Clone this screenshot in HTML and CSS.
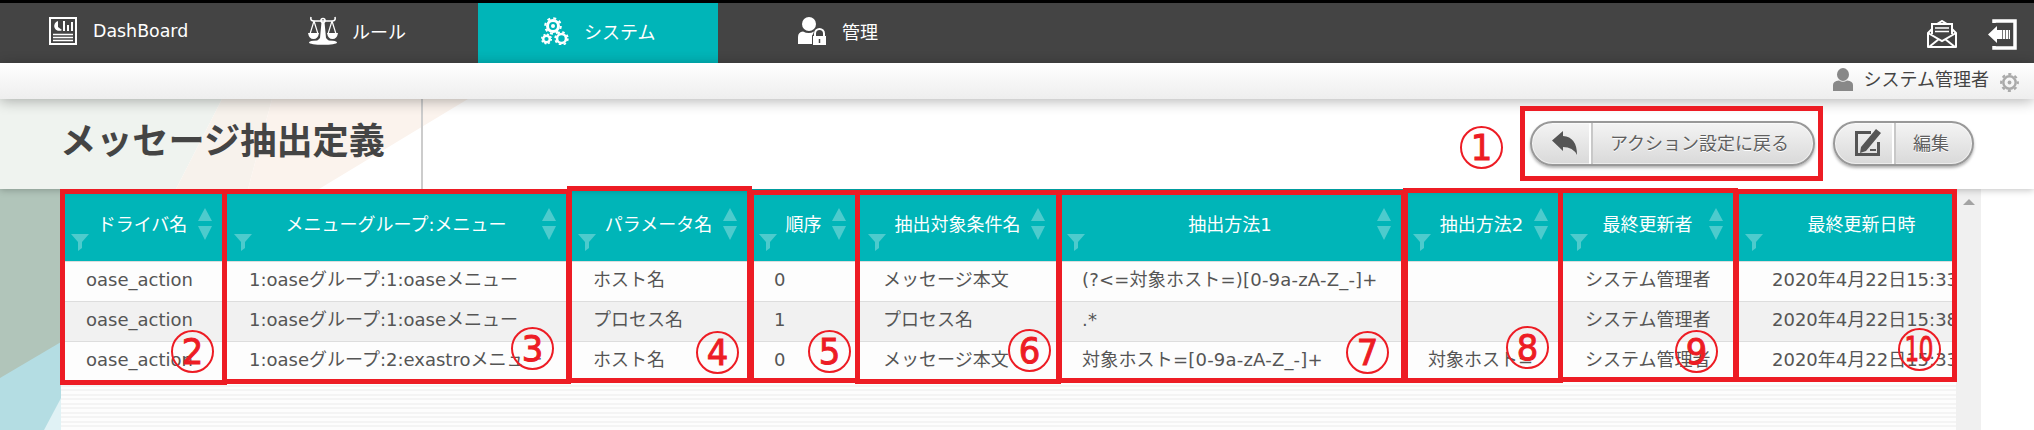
FILE: index.html
```html
<!DOCTYPE html>
<html lang="ja">
<head>
<meta charset="utf-8">
<title>メッセージ抽出定義</title>
<link rel="stylesheet" href="styles.css">
</head>
<body>
<div class="page">
<nav class="nav">
  <div class="tab tab-dash"><svg class="ic" viewBox="0 0 28 28"><path fill="none" stroke="#fff" stroke-width="2" d="M1 1h26v26H1z"/><path fill="#fff" d="M9 4v6l4 3a5 5 0 1 1-4-9zM14 4h2v10h-2zM18 8h2v6h-2zM22 5h2v9h-2z"/><path stroke="#fff" stroke-width="1.3" d="M4 17.5h20M4 20.5h20M4 23.5h20"/></svg><span>DashBoard</span></div>
  <div class="tab tab-rule"><svg class="ic ic-rule" viewBox="0 0 30 30"><g fill="none" stroke="#fff" stroke-width="1.6"><path d="M3 1q-1 4 3 4h18q4 0 3-4"/><path stroke-width="1.2" d="M6 5L2 18M6 5l4 13M24 5l-4 13M24 5l4 13"/><circle cx="15" cy="4.500" r="2"/></g><path fill="#fff" d="M0 17h11q-1 6-5.500 6T0 17zM19 17h11q-1 6-5.500 6T19 17zM13.500 6h3L18 22l3 3H9l3-3z"/><ellipse cx="15" cy="26.500" rx="14" ry="2.300" fill="#fff"/></svg><span>ルール</span></div>
  <div class="tab tab-system"><svg class="ic" viewBox="0 0 28 28"><g fill="none" stroke="#fff"><circle cx="12" cy="9" r="5.500" stroke-width="3"/><circle cx="12" cy="9" r="7.800" stroke-width="2" stroke-dasharray="3 3.130"/><circle cx="5.500" cy="22" r="3.300" stroke-width="2.400"/><circle cx="5.500" cy="22" r="4.800" stroke-width="1.500" stroke-dasharray="1.900 1.870"/><circle cx="20.500" cy="21.500" r="4.500" stroke-width="2.600"/><circle cx="20.500" cy="21.500" r="6.300" stroke-width="1.800" stroke-dasharray="2.500 2.450"/></g><circle cx="12" cy="9" r="2" fill="#fff"/></svg><span>システム</span></div>
  <div class="tab tab-admin"><svg class="ic ic-admin" viewBox="0 0 30 28"><circle cx="12" cy="7" r="7" fill="#fff"/><path fill="#fff" d="M1 27v-7q0-5 5-5.500 6 3 11 0l-2 5v7.500z"/><path fill="#fff" stroke="#444" d="M15.500 18.500h14v10h-14z"/><path fill="none" stroke="#fff" stroke-width="2" d="M18 19v-2.500a4.500 4.500 0 0 1 9 0V19"/><path stroke="#444" stroke-width="1.500" d="M22.500 22v4"/></svg><span>管理</span></div>
  <div class="nav-tools">
    <svg class="ic-mail" viewBox="0 0 30 29"><g fill="none" stroke="#fff" stroke-width="2"><path stroke-linejoin="round" d="M5 9l-4 4v14h28V13l-4-4"/><path d="M1 13l14 8 14-8M2 27l10-8M28 27l-10-8M5 14V4h20v10M10 4l5-3 5 3"/><path stroke-width="1.500" d="M8 8h14M8 11.500h14"/></g></svg>
    <svg class="ic-out" viewBox="0 0 29 31"><path fill="none" stroke="#fff" stroke-width="3.500" d="M6 4V2h21v27H6v-2"/><path fill="#fff" d="M0 15.500L9 7v4h13v9H9v4z"/><path stroke="#777" d="M14.500 11v9M17.500 11v9M20.500 11v9"/></svg>
  </div>
</nav>
<div class="userbar">
  <svg class="ic-user" viewBox="0 0 20 23"><ellipse cx="10" cy="6.500" rx="6" ry="6.500" fill="#888"/><path fill="#888" d="M0 23v-6q0-4 6-4.500 4 2.500 8 0 6 .500 6 4.500v6z"/></svg>
  <span>システム管理者</span>
  <svg class="ic-gear" viewBox="0 0 20 20"><g fill="none" stroke="#aaa"><circle cx="10" cy="10" r="6.500" stroke-width="2.600"/><circle cx="10" cy="10" r="8.800" stroke-width="2.200" stroke-dasharray="3.300 3.610" stroke-dashoffset="1.600"/></g><circle cx="10" cy="10" r="2" fill="#aaa"/></svg>
</div>
<header class="title">
  <svg class="title-bg" viewBox="0 0 470 90"><path fill="#eff3ef" d="M0 0h222l-46 90H0z"/><path fill="#f7f2ec" d="M222 0h50l-24 90h-72z"/><path fill="#fbf3ed" d="M272 0h196L319 90h-71z"/></svg>
  <h1>メッセージ抽出定義</h1>
  <div class="actions">
    <button class="btn btn-back"><span class="btn-ic"><svg width="26" height="24" viewBox="0 0 26 24"><path fill="#555" d="M0 9.500L11 0v5q14 1 14 19-4-8-14-8v4z"/></svg></span><span class="btn-tx">アクション設定に戻る</span></button>
    <button class="btn btn-edit"><span class="btn-ic"><svg width="28" height="28" viewBox="0 0 28 28"><path fill="none" stroke="#555" stroke-width="3" d="M17 3.500H2.500v22h22V13"/><path fill="#555" d="M22 0l5 4-15 18-6 2 1-6zM16 20h6v2h-6z"/></svg></span><span class="btn-tx">編集</span></button>
  </div>
</header>
<main class="main">
  <svg class="main-bg" viewBox="0 0 61 241"><path fill="#b1c5ba" d="M0 0h61v154L0 190z"/><path fill="#b4dde3" d="M0 189l61-36v88H0z"/><path fill="#e0f2f5" d="M61 209v32H44z"/></svg>
  <div class="sheet">
    <table>
      <colgroup><col class="c1"><col class="c2"><col class="c3"><col class="c4"><col class="c5"><col class="c6"><col class="c7"><col class="c8"><col class="c9"></colgroup>
      <thead><tr></tr></thead>
      <tbody>
        <tr><td>oase_action</td><td>1:oaseグループ:1:oaseメニュー</td><td>ホスト名</td><td>0</td><td>メッセージ本文</td><td class="rule">(?&lt;=対象ホスト=)[0-9a-zA-Z_-]+</td><td></td><td>システム管理者</td><td class="date">2020年4月22日15:33</td></tr>
        <tr><td>oase_action</td><td>1:oaseグループ:1:oaseメニュー</td><td>プロセス名</td><td>1</td><td>プロセス名</td><td class="rule">.*</td><td></td><td>システム管理者</td><td class="date">2020年4月22日15:38</td></tr>
        <tr><td>oase_action</td><td>1:oaseグループ:2:exastroメニュー</td><td>ホスト名</td><td>0</td><td>メッセージ本文</td><td class="rule">対象ホスト=[0-9a-zA-Z_-]+</td><td>対象ホスト=</td><td>システム管理者</td><td class="date">2020年4月22日15:33</td></tr>
      </tbody>
    </table>
  </div>
  <div class="scroll"><i></i></div>
</main>
<div class="marks"></div>
</div>
<script src="app.js"></script>
</body>
</html>
```
FILE: app.js
```js
const headings = ['ドライバ名', 'メニューグループ:メニュー', 'パラメータ名', '順序', '抽出対象条件名', '抽出方法1', '抽出方法2', '最終更新者', '最終更新日時'];
const row = document.querySelector('thead tr');
headings.forEach(label => {
  const th = document.createElement('th');
  th.innerHTML = `<div class="th"><svg class="funnel" viewBox="0 0 18 17"><path d="M0 0h18l-7 8v6l-4 3V8z"/></svg><span>${label}</span><svg class="sort" viewBox="0 0 14 32"><path d="M7 0l7 13H0zM0 18h14L7 32z"/></svg></div>`;
  row.appendChild(th);
});

// Annotation frames: left, top, right, bottom
const frames = [
  [1520, 106, 1823, 181], [60, 189, 227, 385], [222, 189, 571, 384], [567, 186, 752, 383],
  [749, 190, 860, 383], [855, 190, 1061, 384], [1057, 190, 1406, 383], [1403, 188, 1563, 383],
  [1558, 188, 1738, 382], [1734, 189, 1957, 382]
];
// Annotation number centres
const numbers = [[1481, 147.5], [192, 351.5], [532, 348.5], [717, 352.5], [829, 351.5], [1029, 350.5], [1367, 352.5], [1527, 347.5], [1696, 351.5], [1919, 349.5]];
const marks = document.querySelector('.marks');
const add = (cls, x, y) => {
  const el = document.createElement('div');
  el.className = cls;
  el.style.left = x + 'px';
  el.style.top = y + 'px';
  marks.appendChild(el);
  return el;
};
frames.forEach(([l, t, r, b]) => {
  const el = add('frame', l, t);
  el.style.width = r - l + 'px';
  el.style.height = b - t + 'px';
});
numbers.forEach(([x, y], i) => add(i === 9 ? 'num num-wide' : 'num', x - 21.5, y - 21.5)
  .insertAdjacentHTML('beforeend', `<span>${i + 1}</span>`));
```
FILE: styles.css
```css
*{box-sizing:border-box}
body{margin:0;background:#fff;color:#555;font:18px "DejaVu Sans","Noto Sans CJK JP",sans-serif;overflow:hidden}
.page{width:2034px;height:430px;position:relative;overflow:hidden;display:flex;flex-direction:column}
svg{display:block;flex:none}
.nav{height:63px;border-top:3px solid #000;background:#444;display:flex;flex:none;color:#fff}
.tab{display:flex;align-items:center;height:60px;white-space:nowrap;padding-bottom:4px}
.tab-dash{width:239px;padding-left:49px;gap:16px}
.tab-dash span{font-size:17.4px}
.tab-rule{width:239px;padding-left:69px;gap:14px}
.tab-system{width:240px;padding-left:63px;gap:15px;background:#00b5b8}
.tab-admin{width:240px;padding-left:79px;gap:15px}
.ic{width:28px;height:28px}
.ic-rule{width:30px;height:30px}
.ic-admin{width:30px;height:28px}
.nav-tools{display:flex;margin-left:auto;align-items:center;gap:31px;padding:2px 17px 0 0}
.ic-mail{width:30px;height:29px}
.ic-out{width:29px;height:31px}
.userbar{height:36px;flex:none;color:#444;background:linear-gradient(#fff,#eee);box-shadow:0 2px 14px rgba(0,0,0,.3);display:flex;justify-content:flex-end;align-items:center;padding-right:15px;position:relative;z-index:2;line-height:32px}
.userbar span{margin:-3px 11px 0 11px}
.ic-user{width:20px;height:23px;margin-top:-4px}
.ic-gear{width:19px;height:19px;margin-top:2px}
.title{height:90px;flex:none;display:flex;align-items:center;position:relative;z-index:1;background:#fff;box-shadow:0 1px 7px rgba(0,0,0,.25)}
.title-bg{width:470px;height:90px;margin-right:-470px}
h1{margin:0;width:423px;height:90px;padding-left:60px;border-right:2px solid #ccc;font:700 36.2px/78px "Noto Sans CJK JP",sans-serif;color:#444;white-space:nowrap;position:relative}
.actions{margin:0 60px 2px auto;display:flex;gap:18px}
.btn{height:45px;border:2px solid #999;border-radius:23px;padding:0;display:flex;background:linear-gradient(#f4f4f4,#d9d9d9);box-shadow:0 2px 3px rgba(0,0,0,.3),inset 0 0 0 1px #fff8;font:400 18px "Noto Sans CJK JP",sans-serif;color:#606060;overflow:hidden}
.btn-back{width:285px}
.btn-edit{width:141px}
.btn-ic{width:59px;height:41px;display:flex;flex:none;align-items:center;justify-content:center;border-right:2px solid #fff;box-shadow:2px 0 #c8c8c8;padding-left:8px}
.btn-tx{flex:1;line-height:38px;text-align:center;text-shadow:0 1px #fff;white-space:nowrap}
.btn-back .btn-tx{padding-right:5px}
.btn-edit .btn-tx{padding-right:4px}
.main{height:241px;display:flex;flex:none;background:#fff}
.main-bg{width:61px;height:241px}
.sheet{width:1895px;height:241px;overflow:hidden;background:repeating-linear-gradient(#fdfdfd 0 2px,#f4f4f4 2.500px 4.500px)}
table{border-collapse:collapse;table-layout:fixed;width:1927px}
.c1{width:163px}
.c2{width:344px}
.c3{width:181px}
.c4{width:109px}
.c5{width:199px}
.c6{width:346px}
.c7{width:157px}
.c8{width:175px}
.c9{width:253px}
th{height:72px;padding:0;background:#00b5b8;color:#fff;font-weight:400;border-bottom:1px solid #ddd}
.th{height:71px;display:flex;align-items:center;padding:0 12px 0 10px}
.th span{flex:1;text-align:center;white-space:nowrap;margin:0 1px 3px -1px}
.funnel{width:18px;height:17px;margin-top:36px;fill:#4dcbcd}
.sort{width:14px;height:32px;margin-bottom:1px;fill:#4dcbcd}
td{height:40px;padding:0 0 2px 25px;white-space:nowrap;overflow:hidden;background:#fdfdfd;border-bottom:1px solid #ddd;line-height:30px}
.rule{letter-spacing:.2px}
td.date{padding-left:37px}
tr:nth-child(2) td{background:#f1f1f1}
.scroll{width:25px;background:#f0f0f0;padding:10px 0 0 7px}
.scroll i{display:block;width:0;border:6px solid transparent;border-top:0;border-bottom-color:#a3a3a3}
.marks{position:absolute;inset:0;z-index:5;pointer-events:none}
.frame{position:absolute;border:5px solid #ed1c24}
.num{position:absolute;width:43px;height:43px;border:2px solid #ed1c24;border-radius:50%;display:flex;align-items:center;justify-content:center;color:#ed1c24;font:36px/39px "DejaVu Sans",sans-serif;-webkit-text-stroke:1px #ed1c24}
.num span{transform:scaleX(.94)}
.num-wide{font-size:34px}
.num-wide span{transform:scaleX(.68);letter-spacing:-1px}
```
